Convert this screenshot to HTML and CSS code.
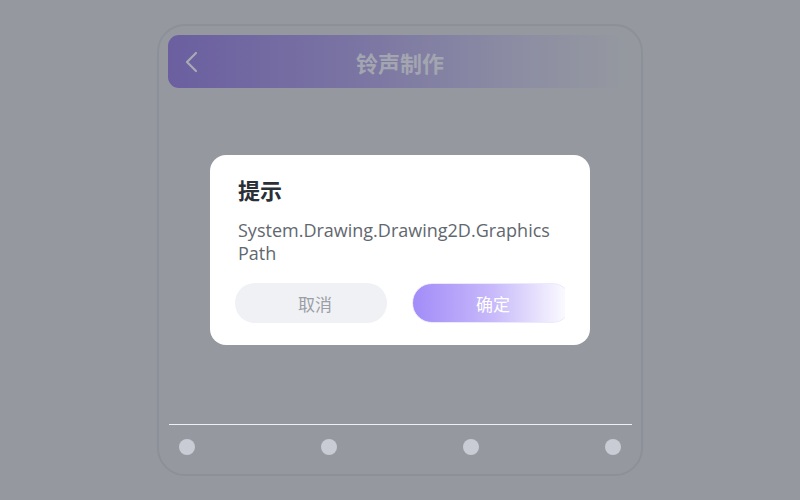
FILE: index.html
```html
<!DOCTYPE html>
<html>
<head>
<meta charset="utf-8">
<link rel="stylesheet" href="styles.css">
</head>
<body>
<div class="frame">
  <div class="header">
    <svg class="back" width="16" height="22" viewBox="0 0 16 22"><path d="M12 2 L3 11 L12 20" fill="none" stroke="#a8abb4" stroke-width="2.2" stroke-linecap="round" stroke-linejoin="round"/></svg>
    <div class="title">铃声制作</div>
  </div>
  <div class="content"></div>
  <div class="divider"></div>
  <div class="dots">
    <span class="dot"></span><span class="dot"></span><span class="dot"></span><span class="dot"></span>
  </div>
</div>
<div class="overlay">
  <div class="dialog">
    <div class="d-title">提示</div>
    <div class="d-body">System.Drawing.Drawing2D.GraphicsPath</div>
    <div class="d-actions">
      <div class="btn cancel">取消</div>
      <div class="clip"><div class="btn ok">确定</div></div>
    </div>
  </div>
</div>
</body>
</html>
```
FILE: styles.css
```css
html, body { margin: 0; padding: 0; }
body {
  width: 800px; height: 500px; background: #95999f; overflow: hidden;
  font-family: "Open Sans", "Noto Sans CJK SC", sans-serif;
  display: flex; justify-content: center; align-items: flex-start;
}
.frame {
  margin-top: 24px; width: 486px; height: 452px; box-sizing: border-box;
  border: 2px solid #8c9098; border-radius: 28px;
  display: flex; flex-direction: column; padding: 9px 9px 0 9px;
}
.header {
  height: 53px; flex: none; border-radius: 11px; position: relative;
  background: linear-gradient(90deg, #6b5fa0 0%, #7a74a3 40%, #8c8da3 75%, #95999f 100%);
  display: flex; align-items: center; justify-content: center;
}
.back { position: absolute; left: 16px; top: 16px; }
.title { font-family: "Noto Sans CJK SC", sans-serif; font-weight: 700; font-size: 22px; color: #a3a5b0; }
.content { flex: 1; }
.divider { height: 1px; background: #eef0f3; margin: 0 0 0 1px; }
.dots { height: 43px; display: flex; justify-content: space-between; align-items: center; padding: 0 11px 6px 11px; }
.dot { width: 16px; height: 16px; border-radius: 50%; background: #c9ccd4; }
.overlay { position: fixed; inset: 0; display: flex; justify-content: center; align-items: center; }
.dialog {
  width: 380px; height: 190px; box-sizing: border-box; background: #fff; border-radius: 16px;
  padding: 18px 25px 22px 25px; display: flex; flex-direction: column;
}
.d-title { font-family: "Noto Sans CJK SC", sans-serif; font-weight: 700; font-size: 22px; color: #2b2f36; line-height: 32px; padding-left: 3px; }
.d-body { font-size: 18px; line-height: 23px; color: #62676f; padding: 14px 0 0 3px; width: 316px; overflow-wrap: anywhere; }
.d-actions { margin-top: auto; display: flex; gap: 25px; height: 40px; }
.btn { height: 40px; box-sizing: border-box; border-radius: 20px; display: flex; align-items: center; justify-content: center; font-family: "Noto Sans CJK SC", sans-serif; font-size: 17px; }
.cancel { width: 153px; background: #f0f1f4; color: #9a9ea6; padding-left: 8px; }
.clip { width: 154px; height: 40px; overflow: hidden; border-radius: 20px 0 0 20px; }
.ok { width: 160px; border: 1px solid #ece8fd; color: #fff; background: linear-gradient(90deg, #a28cf8 0%, #c7b9fa 50%, #ffffff 100%); padding-left: 2px; }
```
